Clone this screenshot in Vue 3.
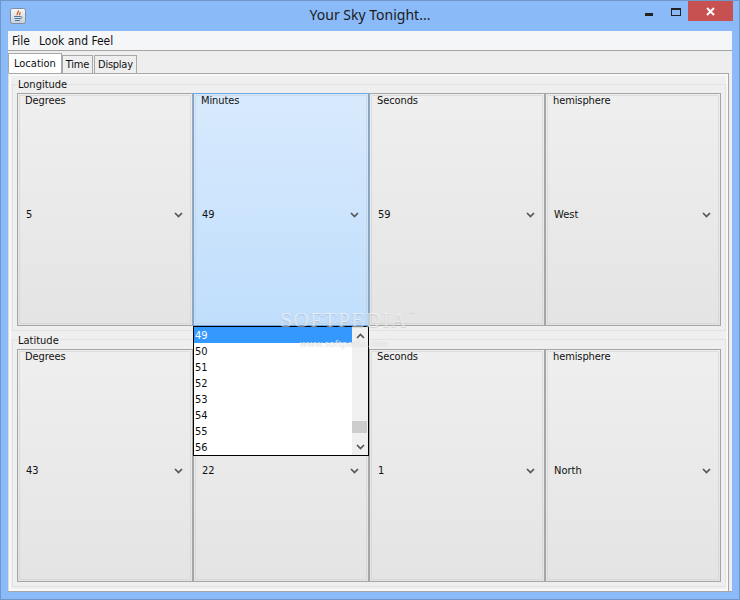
<script setup>
const groups = [
  { name: 'Longitude', cells: [
    { title: 'Degrees', value: '5' },
    { title: 'Minutes', value: '49', hot: true },
    { title: 'Seconds', value: '59' },
    { title: 'hemisphere', value: 'West' }
  ] },
  { name: 'Latitude', cells: [
    { title: 'Degrees', value: '43' },
    { title: '', value: '22' },
    { title: 'Seconds', value: '1' },
    { title: 'hemisphere', value: 'North' }
  ] }
]
const rows = ['49', '50', '51', '52', '53', '54', '55', '56']
</script>

<template>
  <div class="window">
    <header class="titlebar">
      <svg class="appicon" width="17" height="17" viewBox="0 0 17 17">
        <defs>
          <linearGradient id="ic" x1="0" y1="0" x2="0" y2="1">
            <stop offset="0" stop-color="#f7f8fa" />
            <stop offset="1" stop-color="#c9d0da" />
          </linearGradient>
        </defs>
        <rect x="0.5" y="0.5" width="15" height="15" rx="2" fill="url(#ic)" stroke="#7f8ca0" />
        <path d="M8 2.5c1.6 1.5-2 2.6-.6 4.6M10 4.2c.8 1-1.2 1.6-.2 2.9" fill="none" stroke="#d8581e" stroke-width="1.3" />
        <path d="M4 8.5h6.5M4.5 10.5h5.5M5 12.5h5" stroke="#4f76a0" stroke-width="1" />
        <path d="M10.5 8.5c2 0 2 2-.5 2.2" fill="none" stroke="#4f76a0" />
      </svg>
      <span class="wintitle">Your Sky Tonight...</span>
      <div class="winbtns">
        <span class="minb"></span>
        <span class="maxb"></span>
        <span class="closeb">
          <svg width="9" height="9" viewBox="0 0 9 9"><path d="M1 1l7 7M8 1l-7 7" stroke="#fff" stroke-width="2" /></svg>
        </span>
      </div>
    </header>

    <main class="client">
      <nav class="menubar">
        <span>File</span>
        <span>Look and Feel</span>
      </nav>
      <div class="tabs">
        <span class="tab active">Location</span>
        <span class="tab">Time</span>
        <span class="tab">Display</span>
      </div>
      <div class="panel">
        <section v-for="g in groups" :key="g.name" class="group">
          <span class="legend">{{ g.name }}</span>
          <div class="cells">
            <div v-for="(c, i) in g.cells" :key="i" class="cell" :class="{ hot: c.hot }">
              <div class="inner">
                <span v-if="c.title" class="celltitle">{{ c.title }}</span>
                <div class="combo">
                  <span>{{ c.value }}</span>
                  <svg width="9" height="6" viewBox="0 0 9 6"><path d="M1 1l3.5 3.5L8 1" fill="none" stroke="#555" stroke-width="1.7" /></svg>
                </div>
              </div>
            </div>
          </div>
        </section>
      </div>
    </main>

    <div class="popup">
      <div class="list">
        <div v-for="(r, i) in rows" :key="r" class="row" :class="{ sel: i === 0 }">{{ r }}</div>
      </div>
      <div class="scroll">
        <svg width="9" height="6" viewBox="0 0 9 6"><path d="M1 5l3.5-3.5L8 5" fill="none" stroke="#555" stroke-width="1.7" /></svg>
        <span class="thumb"></span>
        <svg class="down" width="9" height="6" viewBox="0 0 9 6"><path d="M1 1l3.5 3.5L8 1" fill="none" stroke="#555" stroke-width="1.7" /></svg>
      </div>
    </div>

    <div class="wm">SOFTPEDIA<sup>™</sup></div>
    <div class="wm2">www.softpedia.com</div>
  </div>
</template>

<style scoped>
.window {
  position: relative;
  box-sizing: border-box;
  width: 740px;
  height: 600px;
  background: #8abaf8;
  border: 1px solid #6f97c8;
  display: flex;
  flex-direction: column;
  padding: 0 7px 7px;
  overflow: hidden;
  font-family: "DejaVu Sans", "Noto Sans", sans-serif;
  font-stretch: condensed;
  font-size: 11px;
  color: #111;
}
.titlebar {
  position: relative;
  height: 30px;
  flex: none;
  display: flex;
  align-items: center;
}
.appicon {
  margin: 0 0 0 2px;
}
.wintitle {
  position: absolute;
  left: 0;
  right: 0;
  top: 4px;
  text-align: center;
  font-family: "Noto Sans", sans-serif;
  font-stretch: normal;
  font-size: 14px;
  line-height: 20px;
  color: #1a1a1a;
}
.winbtns {
  position: absolute;
  right: -1px;
  top: 0;
  display: flex;
  align-items: flex-start;
}
.minb {
  width: 8px;
  height: 3px;
  background: #222;
  margin: 12px 18px 0 0;
}
.maxb {
  box-sizing: border-box;
  width: 10px;
  height: 8px;
  border: 1px solid #222;
  border-top-width: 2px;
  margin: 7px 7px 0 0;
}
.closeb {
  width: 45px;
  height: 20px;
  background: #c75050;
  display: flex;
  align-items: center;
  justify-content: center;
}
.client {
  flex: 1;
  min-height: 0;
  display: flex;
  flex-direction: column;
  background: #eeeeee;
  border-bottom: 1px solid #a8a8a8;
}
.menubar {
  flex: none;
  display: flex;
  gap: 9px;
  align-items: center;
  padding: 1px 0 0 4px;
  height: 18px;
  background: #f5f6f8;
  border-bottom: 1px solid #a5a5a5;
  font-size: 12px;
}
.tabs {
  flex: none;
  height: 22px;
  display: flex;
  align-items: flex-end;
}
.tab {
  box-sizing: border-box;
  height: 18px;
  line-height: 18px;
  padding: 0 3px;
  border: 1px solid #a8a8a8;
  border-bottom: 0;
  margin-right: 1px;
  background: #eeeeee;
  letter-spacing: -0.25px;
}
.tab.active {
  height: 20px;
  background: #fff;
  padding: 0 5px;
  line-height: 20px;
  margin-right: 0;
  letter-spacing: 0;
}
.panel {
  flex: 1;
  min-height: 0;
  margin: 0 3px 0 0;
  box-sizing: border-box;
  border: 1px solid #a8a8a8;
  border-left-color: #dddddd;
  border-bottom: 0;
  background: #efefef;
  box-shadow: inset 0 0 0 2px #f8f8f8;
  padding: 10px 2px 4px 3px;
  display: flex;
  flex-direction: column;
  gap: 8px;
}
.group {
  position: relative;
  flex: 1;
  border: 1px solid #e2e2e2;
  padding: 8px 4px 4px 4px;
  display: flex;
}
.group:last-child {
  padding-top: 9px;
}
.legend {
  position: absolute;
  left: 4px;
  top: -7px;
  padding: 0 1px;
  background: #efefef;
  line-height: 13px;
}
.group:last-child .legend {
  top: -6px;
}
.cells {
  flex: 1;
  display: flex;
}
.cell {
  flex: 1;
  display: flex;
  border: 1px solid #a5a5a5;
  background: linear-gradient(#efefef, #e4e4e4);
}
.cell.hot {
  border-color: #6ea7e6;
  background: linear-gradient(#d8eafd, #c0defc);
}
.inner {
  position: relative;
  flex: 1;
  margin: 1px;
  padding-top: 10px;
  border: 1px solid rgba(200, 200, 200, 0.45);
  display: flex;
  align-items: center;
}
.celltitle {
  position: absolute;
  left: 3px;
  top: -2px;
  line-height: 13px;
  padding: 0 2px;
  letter-spacing: -0.1px;
}
.combo {
  flex: 1;
  display: flex;
  justify-content: space-between;
  align-items: center;
  padding: 0 7px 0 6px;
}
.popup {
  position: absolute;
  left: 192px;
  top: 325px;
  width: 176px;
  height: 130px;
  box-sizing: border-box;
  border: 1px solid #000;
  background: #fff;
  display: flex;
}
.list {
  flex: 1;
}
.row {
  height: 16px;
  line-height: 17px;
  padding-left: 1px;
}
.row.sel {
  background: #3399ff;
  color: #fff;
}
.scroll {
  position: relative;
  width: 16px;
  background: #f0f0f0;
  text-align: center;
}
.scroll svg {
  position: absolute;
  left: 4px;
  top: 6px;
}
.scroll .down {
  top: 117px;
}
.thumb {
  position: absolute;
  left: 0;
  top: 94px;
  width: 15px;
  height: 12px;
  background: #cdcdcd;
}
.wm {
  position: absolute;
  left: 279px;
  top: 306px;
  font-family: "Liberation Serif", serif;
  font-stretch: normal;
  font-size: 22px;
  letter-spacing: 1px;
  line-height: 26px;
  color: rgba(255, 255, 255, 0.55);
  text-shadow: 0 1px 1px rgba(120, 120, 120, 0.25);
}
.wm sup {
  font-size: 7px;
  vertical-align: 12px;
  line-height: 0;
}
.wm2 {
  position: absolute;
  left: 299px;
  top: 337px;
  font-family: "Noto Sans", sans-serif;
  font-stretch: normal;
  font-size: 9.5px;
  line-height: 12px;
  color: rgba(255, 255, 255, 0.7);
  text-shadow: 0 0 1px rgba(160, 160, 160, 0.6);
}
</style>

<style>
body {
  margin: 0;
}
</style>
